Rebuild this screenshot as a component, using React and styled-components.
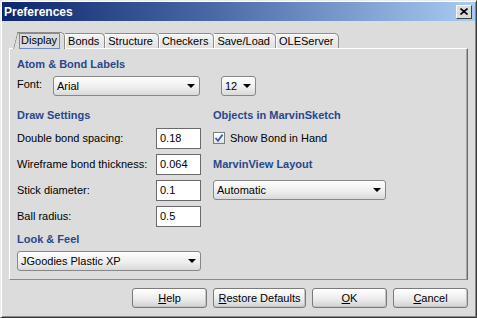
import styled, { createGlobalStyle } from "styled-components";

const GlobalStyle = createGlobalStyle`
  html, body {
    margin: 0;
    padding: 0;
    background: #dcdcdc;
  }
  body {
    font-family: "Liberation Sans", Arial, sans-serif;
    font-size: 11px;
    color: #000;
  }
  * {
    box-sizing: border-box;
  }
`;

const tabs = ["Display", "Bonds", "Structure", "Checkers", "Save/Load", "OLEServer"];

const fields = [
    { label: "Double bond spacing:", value: "0.18" },
    { label: "Wireframe bond thickness:", value: "0.064" },
    { label: "Stick diameter:", value: "0.1" },
    { label: "Ball radius:", value: "0.5" },
];

export default function App() {
    return (
        <>
            <GlobalStyle />
            <Window>
                <TitleBar>
                    <Title>Preferences</Title>
                    <CloseButton>
                        <svg width="8" height="7" viewBox="0 0 8 7">
                            <path d="M0.5 0.5 L7.5 6.5 M7.5 0.5 L0.5 6.5" stroke="#000" strokeWidth="1.6" />
                        </svg>
                    </CloseButton>
                </TitleBar>

                <Body>
                    <TabBar>
                        {tabs.map((t, i) => (
                            <Tab key={t} $active={i === 0}>
                                {i === 0 ? <Focus>{t}</Focus> : t}
                            </Tab>
                        ))}
                    </TabBar>

                    <Panel>
                        <Header>Atom &amp; Bond Labels</Header>
                        <FontRow>
                            <FontLabel>Font:</FontLabel>
                            <Combo $width={147}>
                                Arial
                                <Arrow />
                            </Combo>
                            <SizeCombo $width={35}>
                                12
                                <Arrow />
                            </SizeCombo>
                        </FontRow>

                        <Settings>
                            <Header style={{ gridArea: "draw" }}>Draw Settings</Header>
                            <Header style={{ gridArea: "objects" }}>Objects in MarvinSketch</Header>
                            {fields.map((f, i) => (
                                <Field key={f.label} style={{ gridArea: `f${i}` }}>
                                    <span>{f.label}</span>
                                    <Input>{f.value}</Input>
                                </Field>
                            ))}
                            <CheckRow style={{ gridArea: "check" }}>
                                <CheckBox>
                                    <svg width="10" height="10" viewBox="0 0 10 10">
                                        <path d="M1.5 5 L4 7.8 L8.6 1.6" fill="none" stroke="#3d5fa6" strokeWidth="1.8" />
                                    </svg>
                                </CheckBox>
                                Show Bond in Hand
                            </CheckRow>
                            <Header style={{ gridArea: "view" }}>MarvinView Layout</Header>
                            <Combo $width={173} style={{ gridArea: "layout" }}>
                                Automatic
                                <Arrow />
                            </Combo>
                            <Header style={{ gridArea: "look" }}>Look &amp; Feel</Header>
                            <Combo $width={184} style={{ gridArea: "lookcombo" }}>
                                JGoodies Plastic XP
                                <Arrow />
                            </Combo>
                        </Settings>
                    </Panel>

                    <Buttons>
                        <Button $width={75}><u>H</u>elp</Button>
                        <Button $width={93}><u>R</u>estore Defaults</Button>
                        <Button $width={75}><u>O</u>K</Button>
                        <Button $width={75}><u>C</u>ancel</Button>
                    </Buttons>
                </Body>
            </Window>
        </>
    )
}

const Window = styled.div`
    width: 477px;
    height: 318px;
    display: flex;
    flex-direction: column;
    padding: 1px;
    background: #dcdcdc;
    border: 1px solid;
    border-color: #ececec #3a3a3a #3a3a3a #ececec;
    box-shadow: inset 1px 1px 0 #ffffff, inset -1px -1px 0 #8a8a8a;
`

const TitleBar = styled.div`
    height: 19px;
    display: flex;
    align-items: center;
    justify-content: space-between;
    padding: 0 3px 0 2px;
    background: linear-gradient(to right, #0c266c, #4a6aa6 45%, #a8ccf2);
`

const Title = styled.div`
    color: #fff;
    font-weight: bold;
    font-size: 12px;
`

const CloseButton = styled.div`
    width: 16px;
    height: 14px;
    display: flex;
    align-items: center;
    justify-content: center;
    background: #dcdcdc;
    border: 1px solid;
    border-color: #ffffff #404040 #404040 #ffffff;
`

const Body = styled.div`
    flex: 1;
    display: flex;
    flex-direction: column;
    padding: 11px 7px 0 7px;
`

const TabBar = styled.div`
    height: 16px;
    display: flex;
    align-items: flex-end;
    padding-left: 8px;
`

const Tab = styled.div`
    position: relative;
    height: ${p => p.$active ? 17 : 15}px;
    margin-bottom: ${p => p.$active ? -1 : 0}px;
    z-index: ${p => p.$active ? 2 : 1};
    display: flex;
    align-items: center;
    padding: ${p => p.$active ? "0 4px 0 2px" : "0 5px 0 3px"};
    border-top: 1px solid #8c8c8c;
    border-right: 1px solid #8c8c8c;
    border-top-right-radius: 5px;
    background: ${p => p.$active ? "#dcdcdc" : "linear-gradient(#f6f6f6, #e0e0e0)"};
    box-shadow: ${p => p.$active ? "inset 0 1px 0 #ffffff" : "inset 1px 1px 0 #ffffff"};

    ${p => p.$active && `
        &::before {
            content: "";
            position: absolute;
            left: -4px;
            top: -1px;
            bottom: 0;
            width: 8px;
            background: #dcdcdc;
            border-left: 1px solid #8c8c8c;
            border-top: 1px solid #8c8c8c;
            border-top-left-radius: 3px;
            transform: skewX(-14deg);
            transform-origin: bottom left;
            z-index: -1;
        }
    `}
`

const Focus = styled.span`
    border: 1px solid #6c8cc8;
    padding: 0 2px 1px 1px;
    line-height: 13px;
`

const Panel = styled.div`
    height: 232px;
    padding: 7px 7px 0 7px;
    border: 1px solid;
    border-color: #ffffff #6a6a6a #8a8a8a #ffffff;
    box-shadow: inset -1px 0 0 #a8a8a8;
`

const Header = styled.div`
    height: 16px;
    line-height: 16px;
    font-weight: bold;
    font-size: 11px;
    color: #29478c;
    align-self: center;
`

const FontRow = styled.div`
    margin-top: 4px;
    height: 20px;
    display: flex;
    align-items: center;
`

const FontLabel = styled.span`
    width: 36px;
    align-self: flex-start;
    padding-top: 2px;
`

const Combo = styled.div`
    width: ${p => p.$width}px;
    height: 20px;
    display: flex;
    align-items: center;
    justify-content: space-between;
    padding: 0 4px 0 3px;
    border: 1px solid #878787;
    border-radius: 3px;
    background: linear-gradient(#fdfdfd, #efefef 55%, #d9d9d9);
    align-self: center;
`

const SizeCombo = styled(Combo)`
    margin-left: 21px;
`

const Arrow = styled.span`
    width: 0;
    height: 0;
    border-left: 4px solid transparent;
    border-right: 4px solid transparent;
    border-top: 4px solid #000;
`

const Settings = styled.div`
    margin-top: 11px;
    display: grid;
    grid-template-columns: 184px 1fr;
    grid-template-rows: 16px repeat(4, 22px) 16px 20px;
    column-gap: 12px;
    row-gap: 4px;
    grid-template-areas:
        "draw objects"
        "f0 check"
        "f1 view"
        "f2 layout"
        "f3 ."
        "look ."
        "lookcombo .";
`

const Field = styled.div`
    display: flex;
    align-items: center;
    justify-content: space-between;
`

const Input = styled.div`
    width: 45px;
    height: 21px;
    display: flex;
    align-items: center;
    padding-left: 3px;
    background: #fff;
    border: 1px solid #6a6a6a;
`

const CheckRow = styled.div`
    display: flex;
    align-items: center;
    gap: 5px;
`

const CheckBox = styled.div`
    width: 12px;
    height: 12px;
    display: flex;
    align-items: center;
    justify-content: center;
    border: 1px solid #7c7c7c;
    background: linear-gradient(#ffffff, #e2e2e2);
`

const Buttons = styled.div`
    margin-top: 8px;
    display: flex;
    justify-content: flex-end;
    gap: 6px;
`

const Button = styled.div`
    width: ${p => p.$width}px;
    height: 20px;
    display: flex;
    align-items: center;
    justify-content: center;
    border: 1px solid #7a7a7a;
    border-radius: 3px;
    background: linear-gradient(#ffffff, #ececec 55%, #d2d2d2);
    box-shadow: inset -1px -1px 0 #c4c4c4;

    u {
        text-decoration: underline;
    }
`
